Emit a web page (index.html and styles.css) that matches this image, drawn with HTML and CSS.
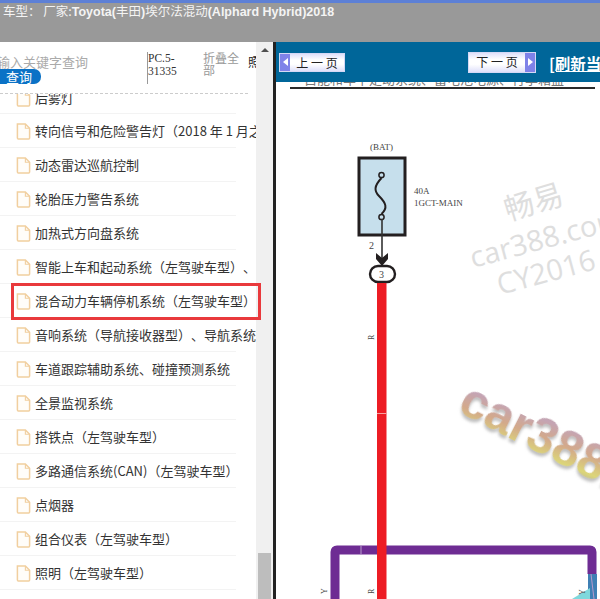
FILE: index.html
```html
<!DOCTYPE html>
<html lang="en">
<head>
  <meta charset="UTF-8">
  <title>车型</title>
  <link rel="stylesheet" href="styles.css">
</head>
<body>

  <!-- Top bar -->
  <header class="topbar">
    <span class="cjk">车型： 厂家:</span><b>Toyota(</b><span class="cjk">丰田</span><b>)</b><span class="cjk">埃尔法混动</span><b>(Alphard Hybrid)2018</b>
  </header>

  <div class="main">
    <!-- Left: list -->
    <aside class="sidebar">
      <div class="side-content">
        <div class="search-row">
          <div class="search">
            <div class="search-input">输入关键字查询</div>
            <div class="search-btn">查询</div>
          </div>
          <div class="pc-code">PC.5-<br>31335</div>
          <div class="fold">折叠全部</div>
          <div class="photo">照</div>
        </div>
        <div class="dash"></div>
        <ul class="tree">
          <li class="first"><svg class="doc"><use href="#doc"/></svg>后雾灯</li>
          <li><svg class="doc"><use href="#doc"/></svg>转向信号和危险警告灯（2018 年 1 月之后）</li>
          <li><svg class="doc"><use href="#doc"/></svg>动态雷达巡航控制</li>
          <li><svg class="doc"><use href="#doc"/></svg>轮胎压力警告系统</li>
          <li><svg class="doc"><use href="#doc"/></svg>加热式方向盘系统</li>
          <li><svg class="doc"><use href="#doc"/></svg>智能上车和起动系统（左驾驶车型）、</li>
          <li><svg class="doc"><use href="#doc"/></svg>混合动力车辆停机系统（左驾驶车型）</li>
          <li><svg class="doc"><use href="#doc"/></svg>音响系统（导航接收器型）、导航系统</li>
          <li><svg class="doc"><use href="#doc"/></svg>车道跟踪辅助系统、碰撞预测系统</li>
          <li><svg class="doc"><use href="#doc"/></svg>全景监视系统</li>
          <li><svg class="doc"><use href="#doc"/></svg>搭铁点（左驾驶车型）</li>
          <li><svg class="doc"><use href="#doc"/></svg>多路通信系统(CAN)（左驾驶车型）</li>
          <li><svg class="doc"><use href="#doc"/></svg>点烟器</li>
          <li><svg class="doc"><use href="#doc"/></svg>组合仪表（左驾驶车型）</li>
          <li><svg class="doc"><use href="#doc"/></svg>照明（左驾驶车型）</li>
        </ul>
      </div>
      <div class="scrollbar">
        <div class="scroll-up"></div>
        <div class="scroll-thumb"></div>
      </div>
      <div class="highlight"></div>
    </aside>

    <!-- Right: wiring diagram -->
    <section class="viewer">
      <div class="toolbar">
        <div class="page-btn prev"><span class="btn-arrow"><i></i></span><span class="btn-label">上 一 页</span></div>
        <div class="page-btn next"><span class="btn-label">下 一 页</span><span class="btn-arrow"><i></i></span></div>
        <a class="refresh">[刷新当前页]</a>
      </div>
      <svg class="diagram" width="324" height="517" viewBox="276 82 324 517">
        <defs>
          <linearGradient id="rainbow" x1="0" y1="0" x2="0.5" y2="1">
            <stop offset="0" stop-color="#b3a595"/>
            <stop offset="0.3" stop-color="#c4a4b4"/>
            <stop offset="0.55" stop-color="#d3a98a"/>
            <stop offset="0.8" stop-color="#dcd678"/>
            <stop offset="1" stop-color="#a8a0b8"/>
          </linearGradient>
          <filter id="soft" x="-10%" y="-10%" width="120%" height="130%">
            <feDropShadow dx="1" dy="3" stdDeviation="1.5" flood-color="#888" flood-opacity="0.55"/>
          </filter>
        </defs>

        <text class="clip-title" x="304" y="84">自能和车下定动系统、蓄电池电源、行李箱盖</text>
        <rect x="290" y="87" width="305" height="2" fill="#2b2b2b"/>

        <text class="wd-label" x="370" y="150">(BAT)</text>
        <rect x="359" y="158" width="46" height="77" fill="#c6dfec" stroke="#231f20" stroke-width="3"/>
        <path d="M381.500 178 C374 186 374 191 379 196 C386 203 388 208 381.500 214" fill="none" stroke="#231f20" stroke-width="2"/>
        <circle cx="381.500" cy="175" r="2.600" fill="#c6dfec" stroke="#231f20" stroke-width="1.500"/>
        <circle cx="381.500" cy="217" r="2.600" fill="#c6dfec" stroke="#231f20" stroke-width="1.500"/>
        <text class="wd-label" x="414" y="194">40A</text>
        <text class="wd-label" x="414" y="206">1GCT-MAIN</text>

        <path d="M382 219 V258" stroke="#333" stroke-width="1.600"/>
        <path d="M376 253 L382 258 L388 253 V259 L382 266 L376 259 Z" fill="#231f20"/>
        <text class="wd-num" x="369" y="249">2</text>
        <rect x="370" y="266" width="25" height="16" rx="8" fill="#fff" stroke="#231f20" stroke-width="2.400"/>
        <text class="wd-num" x="379" y="278">3</text>

        <path d="M335 599 V552 Q335 550 337 550 H590 Q592 550 592 552 V574" fill="none" stroke="#6e2c93" stroke-width="9"/>
        <path d="M588 574 H597 V599 H588 Z" fill="#3f7fb4"/>
        <path d="M572 599 L590 588 V599 Z" fill="#7fd8dc"/>
        <path d="M591 574 L594 599" stroke="#b89acb" stroke-width="1"/>
        <rect x="377" y="283" width="9.500" height="316" fill="#ed1c24"/>
        <path d="M377 413.500 H386.500" stroke="#f7a0a0" stroke-width="1"/>
        <path d="M361 546 V554" stroke="#b79ccb" stroke-width="1"/>

        <text class="wd-small" transform="translate(374 340) rotate(-90)">R</text>
        <text class="wd-small" transform="translate(374 594) rotate(-90)">R</text>
        <text class="wd-small" transform="translate(327 594) rotate(-90)">Y</text>
        <text class="wd-small" transform="translate(585 595) rotate(-90)">Y</text>

        <!-- watermarks -->
        <text class="mark-cn" transform="translate(508 221) rotate(-17)">畅易</text>
        <text class="mark" transform="translate(473 268) rotate(-15)">car388.com</text>
        <text class="mark" transform="translate(500 295) rotate(-15)">CY2016</text>
        <text class="mark-color" filter="url(#soft)" transform="translate(456 411) rotate(27)">car388.com</text>
      </svg>
    </section>
  </div>

  <svg width="0" height="0" class="defs">
    <symbol id="doc" viewBox="0 0 16 18">
      <path d="M1.500 1 H10 L14.500 5.500 V16 Q14.500 17 13.500 17 H2.500 Q1.500 17 1.500 16 Z" fill="#fffdf9" stroke="#f1cf9f" stroke-width="1.600"/>
      <path d="M10 1 V5.500 H14.500" fill="none" stroke="#f1cf9f" stroke-width="1.200"/>
    </symbol>
  </svg>

</body>
</html>
```

FILE: styles.css
```css
* { margin: 0; padding: 0; box-sizing: border-box; }
html, body { height: 100%; overflow: hidden; }
body {
  font-family: "Liberation Sans", "Noto Sans CJK SC", sans-serif;
  background: #fff;
  display: flex;
  flex-direction: column;
  text-spacing-trim: space-all;
}
.defs { position: absolute; }

/* top bar */
.topbar {
  height: 42px;
  flex: none;
  background: #999;
  border-top: 3px solid #5d80d6;
  padding: 0 0 0 3px;
  color: #f4f4f4;
  font-size: 12.5px;
  line-height: 16px;
  white-space: nowrap;
  overflow: hidden;
}
.topbar b { font-weight: 700; }
.cjk { font-family: "Noto Sans CJK SC", sans-serif; }

.main { flex: 1; display: flex; min-height: 0; }

/* left panel */
.sidebar {
  position: relative;
  width: 273px;
  flex: none;
  display: flex;
}
.side-content { width: 256px; flex: none; overflow: hidden; }
.search-row {
  height: 51px;
  display: flex;
}
.dash { height: 1px; margin-right: 8px; border-top: 1px dashed #ccc; }
.search { width: 147px; flex: none; padding-top: 12px; }
.search-input {
  margin-left: -3px;
  height: 16px;
  font: 13px/16px "Noto Sans CJK SC", sans-serif;
  color: #aaa;
  white-space: nowrap;
}
.search-btn {
  width: 41px;
  height: 15px;
  margin-top: -1px;
  background: #0b72c6;
  border-radius: 0 7px 7px 0;
  color: #fff;
  font: 13px/15px "Noto Sans CJK SC", sans-serif;
  padding-left: 6px;
}
.pc-code {
  width: 56px;
  height: 32px;
  flex: none;
  margin-top: 10px;
  border-left: 1px solid #999;
  font: 11.5px/13px "Liberation Serif", serif;
  color: #333;
}
.fold {
  width: 45px;
  flex: none;
  margin-top: 10px;
  font: 12px/12px "Noto Sans CJK SC", sans-serif;
  color: #999;
}
.photo {
  margin-top: 12px;
  font: 12px/16px "Noto Sans CJK SC", sans-serif;
  color: #222;
  overflow: hidden;
  width: 8px;
}

.tree { list-style: none; }
.tree li {
  height: 34px;
  display: flex;
  align-items: center;
  gap: 4px;
  padding-left: 16px;
  font: 13px/18px "Noto Sans CJK SC", sans-serif;
  color: #333;
  white-space: nowrap;
  overflow: hidden;
  background: linear-gradient(#f3f3f3, #f3f3f3) 0 100% / 236px 1px no-repeat;
}
.tree li.first { height: 20px; align-items: flex-end; padding-bottom: 7px; }
.doc { width: 15px; height: 17px; flex: none; }

.scrollbar {
  width: 17px;
  flex: none;
  background: #f0f0f0;
  position: relative;
}
.scroll-up {
  margin: 6px auto 0;
  width: 0;
  border: 4px solid transparent;
  border-top: 0;
  border-bottom: 4px solid #505050;
}
.scroll-thumb {
  position: absolute;
  left: 2px;
  right: 2px;
  bottom: 0;
  height: 46px;
  background: #bdbdbd;
}
.highlight {
  position: absolute;
  left: 11px;
  top: 241px;
  width: 250px;
  height: 37px;
  border: 3px solid #e9393c;
  pointer-events: none;
}

/* right panel */
.viewer {
  flex: 1;
  min-width: 0;
  border-left: 3px solid #222;
  display: flex;
  flex-direction: column;
  overflow: hidden;
}
.toolbar {
  height: 40px;
  flex: none;
  background: #006699;
  display: flex;
  align-items: center;
  padding-left: 3px;
  white-space: nowrap;
}
.page-btn {
  display: flex;
  height: 19px;
  width: 66px;
  flex: none;
  border: 1px solid #d5d8f5;
  background: linear-gradient(#dfe0fa, #fff 35%, #fff 60%, #dfe0fa);
  font: 12px/17px "Noto Sans CJK SC", sans-serif;
  color: #222;
}
.page-btn.next { margin-left: 123px; width: 68px; height: 21px; }
.btn-label { flex: 1; text-align: center; }
.btn-arrow {
  width: 10px;
  flex: none;
  background: #7f82e8;
  display: flex;
  align-items: center;
  justify-content: center;
}
.btn-arrow i { display: block; width: 0; border: 4px solid transparent; }
.prev .btn-arrow i { border-left: 0; border-right: 5px solid #fff; }
.next .btn-arrow i { border-right: 0; border-left: 5px solid #fff; }
.refresh {
  margin-left: 13px;
  padding-top: 2px;
  font: 700 15.5px/18px "Noto Sans CJK SC", sans-serif;
  color: #fff;
  text-decoration: underline;
}
.diagram { display: block; flex: none; }

/* diagram text */
.clip-title { font: 13px "Noto Sans CJK SC", sans-serif; fill: #777; }
.wd-label { font: 9px "Liberation Serif", serif; fill: #444; }
.wd-num { font: 10px "Liberation Serif", serif; fill: #444; }
.wd-small { font: 8px "Liberation Serif", serif; fill: #444; }
.mark { font: 29px "Open Sans", sans-serif; fill: #dedede; }
.mark-cn { font: 30px "Noto Sans CJK SC", sans-serif; fill: #dedede; }
.mark-color { font: 700 50px "Liberation Sans", sans-serif; fill: url(#rainbow); }
```
